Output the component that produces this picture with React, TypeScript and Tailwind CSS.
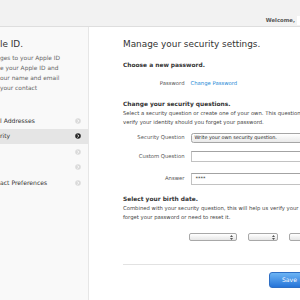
import React from "react";

function Chev({ active = false }: { active?: boolean }) {
  return (
    <svg width="6" height="6" viewBox="0 0 6 6" className="shrink-0">
      <circle cx="3" cy="3" r="2.8" fill={active ? "#262626" : "#dadada"} />
      <path d="M2.4 1.6 L3.8 3 L2.4 4.4" stroke="#fff" strokeWidth="0.9" fill="none" />
    </svg>
  );
}

function UpDown() {
  return (
    <svg width="3" height="5" viewBox="0 0 3 5" className="shrink-0">
      <path d="M1.5 0 L3 2 L0 2 Z M0 3 L3 3 L1.5 5 Z" fill="#555" />
    </svg>
  );
}

function DateSelect({ w }: { w: string }) {
  return (
    <div
      className={`${w} shrink-0 h-[8px] rounded-[2px] border border-[#a8a8a8] bg-linear-to-b from-white to-[#e6e6e6] flex items-center justify-end pr-[2.5px]`}
    >
      <UpDown />
    </div>
  );
}

const navItems = [
  { label: "l Addresses", active: false },
  { label: "rity", active: true },
  { label: "", active: false },
  { label: "", active: false },
  { label: "act Preferences", active: false },
];

export default function App() {
  return (
    <div className="w-[300px] h-[300px] overflow-hidden bg-white font-['DejaVu_Sans',sans-serif] flex flex-col">
      <header className="h-[27px] shrink-0 bg-[#f2f2f2] border-b border-[#dedede] flex justify-end items-start pt-[16px]">
        <span className="text-[5.35px] font-bold text-[#555] leading-[9px] whitespace-nowrap">Welcome,</span>
        <div className="ml-[2px] w-[3px] h-[9px] bg-white" />
      </header>
      <div className="flex flex-1 min-h-0">
        <aside className="w-[89px] shrink-0 bg-[#f9f9f9] border-r border-[#e6e6e6]">
          <div className="pt-[11px] text-[8.9px] leading-[12px] text-[#333] whitespace-nowrap">le ID.</div>
          <div className="mt-[3px] text-[5.9px] leading-[10px] text-[#666] whitespace-nowrap">
            <div>ges to your Apple ID</div>
            <div>e your Apple ID and</div>
            <div>our name and email</div>
            <div>your contact</div>
          </div>
          <nav className="mt-[20px]">
            {navItems.map((item, i) => (
              <div
                key={i}
                className={`h-[15.5px] flex items-center justify-between pr-[7px] ${item.active ? "bg-[#e5e5e5]" : ""}`}
              >
                <span className="text-[6.1px] leading-[8px] text-[#333] whitespace-nowrap">{item.label}</span>
                <Chev active={item.active} />
              </div>
            ))}
          </nav>
        </aside>
        <main className="flex-1 min-w-0 pl-[34px] text-[#333]">
          <h1 className="mt-[11px] text-[8.9px] leading-[12px] whitespace-nowrap">Manage your security settings.</h1>
          <h2 className="mt-[11px] text-[5.9px] font-bold leading-[8px] whitespace-nowrap">Choose a new password.</h2>
          <div className="mt-[10px] flex items-center h-[10px]">
            <span className="w-[61.5px] shrink-0 text-right text-[5.3px] text-[#555] whitespace-nowrap">Password</span>
            <a className="ml-[6px] text-[5.3px] text-[#1f8ad6] whitespace-nowrap">Change Password</a>
          </div>
          <h2 className="mt-[11px] text-[5.9px] font-bold leading-[8px] whitespace-nowrap">Change your security questions.</h2>
          <div className="mt-[0.5px] text-[5.3px] leading-[9px] text-[#444] whitespace-nowrap">
            <div>Select a security question or create one of your own. This question will help us</div>
            <div>verify your identity should you forget your password.</div>
          </div>
          <div className="mt-[6.5px] flex items-center">
            <span className="w-[61.5px] shrink-0 text-right text-[5.3px] leading-[9.5px] text-[#555] whitespace-nowrap">Security Question</span>
            <div className="ml-[6px] w-[130px] shrink-0 h-[9.5px] rounded-[2.5px] border border-[#a5a5a5] bg-linear-to-b from-white to-[#e9e9e9] flex items-center pl-[3px] text-[4.9px] text-[#222] whitespace-nowrap">
              Write your own security question.
            </div>
          </div>
          <div className="mt-[8px] flex items-center">
            <span className="w-[61.5px] shrink-0 text-right text-[5.3px] leading-[11px] text-[#555] whitespace-nowrap">Custom Question</span>
            <div className="ml-[6px] w-[130px] shrink-0 h-[11px] border border-[#c2c2c2] border-t-[#a3a3a3] bg-white" />
          </div>
          <div className="mt-[11.5px] flex items-center">
            <span className="w-[61.5px] shrink-0 text-right text-[5.3px] leading-[11px] text-[#555] whitespace-nowrap">Answer</span>
            <div className="ml-[6px] w-[130px] shrink-0 h-[11.5px] border border-[#c2c2c2] border-t-[#a3a3a3] bg-white flex items-center pl-[4px] text-[5px] text-[#333] leading-[5px]">
              ****
            </div>
          </div>
          <h2 className="mt-[10px] text-[5.9px] font-bold leading-[8px] whitespace-nowrap">Select your birth date.</h2>
          <div className="mt-[1px] text-[5.3px] leading-[9px] text-[#444] whitespace-nowrap">
            <div>Combined with your security question, this will help us verify your identity if you</div>
            <div>forget your password or need to reset it.</div>
          </div>
          <div className="mt-[11.5px] ml-[66.3px] flex items-center gap-[11.3px]">
            <DateSelect w="w-[47.5px]" />
            <DateSelect w="w-[30px]" />
            <DateSelect w="w-[30px]" />
          </div>
          <div className="mt-[23px] h-px bg-[#e2e2e2]" />
          <div className="mt-[6.5px] ml-[146px] w-[40px] h-[16.5px] rounded-[3px] border border-[#2f6fc4] bg-linear-to-b from-[#6cb4f4] to-[#2574d8] flex items-center pl-[12px] text-[6.1px] text-white whitespace-nowrap">
            Save
          </div>
        </main>
      </div>
    </div>
  );
}
